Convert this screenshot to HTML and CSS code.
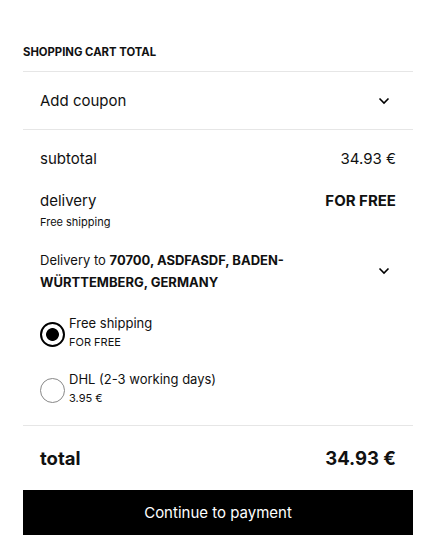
FILE: index.html
```html
<!DOCTYPE html>
<html>
<head>
<meta charset="utf-8">
<link rel="stylesheet" href="styles.css">
</head>
<body>
<div class="cart">
  <h2 class="title">SHOPPING CART TOTAL</h2>
  <div class="coupon">
    <span>Add coupon</span>
    <svg class="chev" width="12" height="8" viewBox="0 0 12 8"><path d="M1.5 1.5 L6 6 L10.5 1.5" fill="none" stroke="#000" stroke-width="1.6"/></svg>
  </div>
  <div class="summary">
    <div class="row">
      <span>subtotal</span>
      <span>34.93 €</span>
    </div>
    <div class="row delivery">
      <span>delivery</span>
      <span class="bold">FOR FREE</span>
    </div>
    <div class="sub">Free shipping</div>
    <div class="address">
      <p>Delivery to <b>70700, ASDFASDF, BADEN-WÜRTTEMBERG, GERMANY</b></p>
      <svg class="chev" width="12" height="8" viewBox="0 0 12 8"><path d="M1.5 1.5 L6 6 L10.5 1.5" fill="none" stroke="#000" stroke-width="1.6"/></svg>
    </div>
    <div class="options">
      <label class="option">
        <span class="radio checked"></span>
        <span class="opt-text"><span class="opt-name">Free shipping</span><span class="opt-price">FOR FREE</span></span>
      </label>
      <label class="option">
        <span class="radio"></span>
        <span class="opt-text"><span class="opt-name">DHL (2-3 working days)</span><span class="opt-price">3.95 €</span></span>
      </label>
    </div>
  </div>
  <div class="total">
    <span>total</span>
    <span>34.93 €</span>
  </div>
  <button class="pay">Continue to payment</button>
</div>
</body>
</html>
```
FILE: styles.css
```css
* { box-sizing: border-box; }
body {
  margin: 0;
  background: #fff;
  font-family: Inter, "Noto Sans", sans-serif;
  color: #111;
}
.cart {
  width: 390px;
  margin-left: 23px;
  padding-top: 45px;
}
.title {
  margin: 0;
  font-size: 11.3px;
  font-weight: 700;
  line-height: 14px;
  padding-bottom: 12px;
  border-bottom: 1px solid #e6e6e6;
  letter-spacing: 0;
}
.coupon {
  height: 58px;
  display: flex;
  align-items: center;
  justify-content: space-between;
  padding: 0 23px 0 17px;
  font-size: 15px;
  border-bottom: 1px solid #e6e6e6;
}
.chev { display: block; }
.summary {
  padding: 19px 17px 19px;
  border-bottom: 1px solid #e6e6e6;
}
.row {
  display: flex;
  justify-content: space-between;
  font-size: 15px;
  line-height: 20px;
}
.row.delivery { margin-top: 22px; }
.bold { font-weight: 700; }
.sub {
  font-size: 11px;
  line-height: 15px;
  margin-top: 4px;
}
.address {
  display: flex;
  align-items: center;
  justify-content: space-between;
  margin-top: 19px;
  padding-right: 6px;
}
.address p {
  margin: 0;
  font-size: 13px;
  line-height: 22px;
  width: 260px;
}
.address b { font-weight: 700; }
.options {
  margin-top: 21px;
  display: flex;
  flex-direction: column;
  gap: 20px;
}
.option {
  display: flex;
  align-items: center;
  gap: 4px;
}
.radio {
  width: 25px;
  height: 25px;
  border: 1px solid #888;
  border-radius: 50%;
  flex: none;
  margin-top: 4px;
}
.radio.checked {
  border: 2px solid #000;
  background: radial-gradient(circle, #000 0 6px, #fff 6.8px);
}
.opt-text { display: flex; flex-direction: column; }
.opt-name { font-size: 13px; line-height: 18px; }
.opt-price { font-size: 11px; line-height: 16px; margin-top: 2px; }
.total {
  display: flex;
  justify-content: space-between;
  padding: 20px 17px 0;
  height: 64px;
  font-size: 18.5px;
  font-weight: 700;
  line-height: 24px;
}
.pay {
  display: block;
  width: 390px;
  height: 45px;
  border: 0;
  background: #000;
  color: #fff;
  font-family: Inter, "Noto Sans", sans-serif;
  font-size: 15px;
  padding: 0;
}
```
